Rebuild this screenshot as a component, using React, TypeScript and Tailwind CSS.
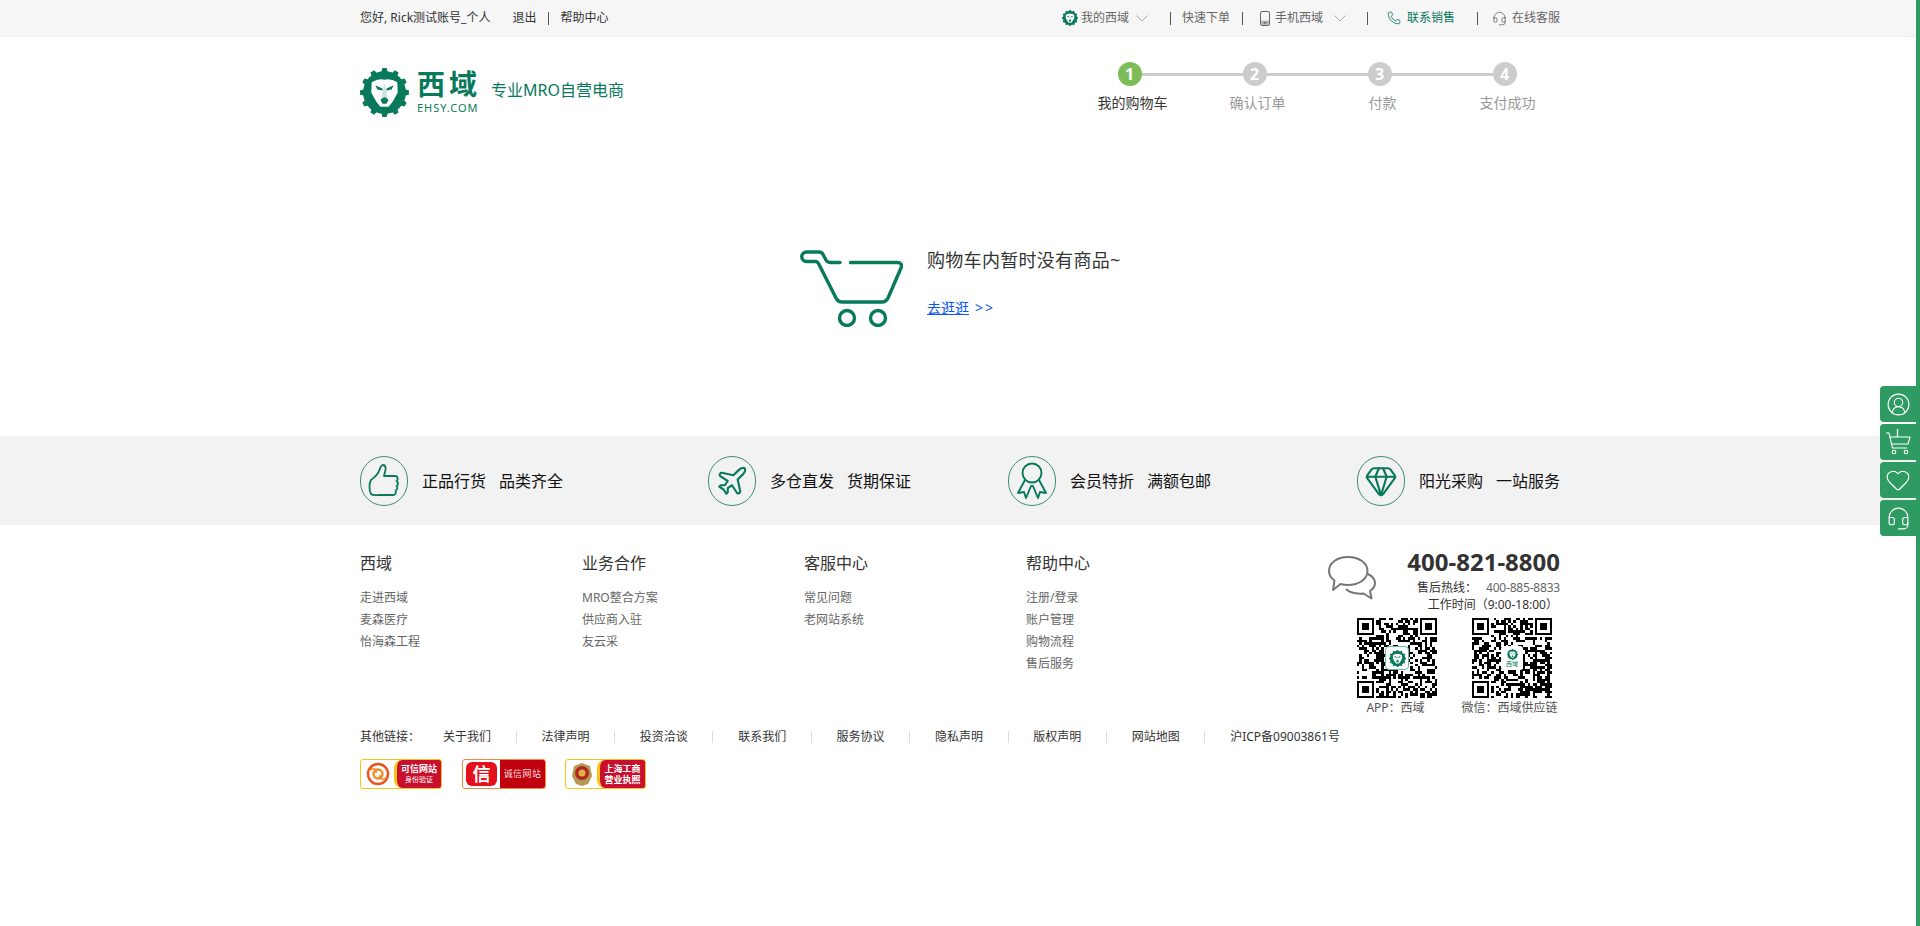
import React from "react";
import { Plane, Gem, CircleUserRound, Heart, Headset, Phone } from "lucide-react";

const GREEN = "#08795b";

function gearPath(cx: number, cy: number, ro: number, ri: number, teeth: number) {
  const pts: string[] = [];
  const step = (Math.PI * 2) / teeth;
  for (let i = 0; i < teeth; i++) {
    const a = i * step - Math.PI / 2;
    const seq: [number, number][] = [
      [a - step * 0.27, ri],
      [a - step * 0.17, ro],
      [a + step * 0.17, ro],
      [a + step * 0.27, ri],
    ];
    seq.forEach(([an, r]) => pts.push(`${(cx + r * Math.cos(an)).toFixed(2)},${(cy + r * Math.sin(an)).toFixed(2)}`));
  }
  return "M" + pts.join("L") + "Z";
}

function LionGear({ size, className }: { size: number; className?: string }) {
  return (
    <svg width={size} height={size} viewBox="0 0 48 48" className={className}>
      <path d={gearPath(24, 24, 24, 20.5, 12)} fill={GREEN} />
      <circle cx="24" cy="24" r="21" fill={GREEN} />
      <path d="M11.5 14 Q18 10 24 11.5 Q30 10 36.5 14 L37 24 L32 33 L28 38 L20 38 L16 33 L11 24 Z" fill="#fff" />
      <path d="M15 17 L22 20 L22 22 L17 21 Z M33 17 L26 20 L26 22 L31 21 Z" fill={GREEN} />
      <path d="M22 23 L24 15 L26 23 L27 30 L24 32 L21 30 Z" fill={GREEN} opacity="0.2" />
      <path d="M20 31 L24 28.5 L28 31 L26 35 L22 35 Z" fill={GREEN} />
    </svg>
  );
}

function Chevron() {
  return (
    <svg width="12" height="7" viewBox="0 0 12 7" className="shrink-0">
      <path d="M0.5 0.5 L6 6 L11.5 0.5" fill="none" stroke="#aaa" strokeWidth="1" />
    </svg>
  );
}

function Bar({ className }: { className: string }) {
  return <span className={`block h-[13px] w-px bg-[#555] ${className}`} />;
}

function TopBar() {
  return (
    <div className="h-[37px] bg-[#f6f6f6] border-b border-[#eeeeee]">
      <div className="w-[1200px] mx-auto h-full flex items-center justify-between text-xs text-[#333]">
        <div className="flex items-center">
          <span>您好, Rick测试账号_个人</span>
          <span className="ml-[22px]">退出</span>
          <Bar className="ml-[12px]" />
          <span className="ml-[11px]">帮助中心</span>
        </div>
        <div className="flex items-center text-[#666]">
          <LionGear size={16} />
          <span className="ml-[3px]">我的西域</span>
          <span className="ml-[7px]"><Chevron /></span>
          <Bar className="ml-[22px]" />
          <span className="ml-[11px]">快速下单</span>
          <Bar className="ml-[12px]" />
          <svg width="10" height="15" viewBox="0 0 10 15" className="ml-[17px]">
            <rect x="0.5" y="0.5" width="9" height="14" rx="1.5" fill="none" stroke="#666" />
            <rect x="1" y="9.5" width="8" height="4.5" fill="#bbb" />
            <rect x="3.5" y="11" width="3" height="1.5" fill="#666" />
          </svg>
          <span className="ml-[5px]">手机西域</span>
          <span className="ml-[11px]"><Chevron /></span>
          <Bar className="ml-[21px]" />
          <Phone size={14} color={GREEN} strokeWidth={1.4} className="ml-[19px]" />
          <span className="ml-[6px] text-[#08795b]">联系销售</span>
          <Bar className="ml-[22px]" />
          <Headset size={15} color="#666" strokeWidth={1.3} className="ml-[14px]" />
          <span className="ml-[5px]">在线客服</span>
        </div>
      </div>
    </div>
  );
}

const STEPS = ["我的购物车", "确认订单", "付款", "支付成功"];

function Header() {
  return (
    <div className="w-[1200px] mx-auto h-[93px] flex justify-between">
      <div className="flex items-start pt-[31px]">
        <LionGear size={49} />
        <div className="ml-[8px] w-[62px] flex flex-col text-[#08795b]">
          <span className="h-[30px] mt-[1px] text-[28px] leading-[30px] font-bold tracking-[4px] whitespace-nowrap">西域</span>
          <span className="mt-[2px] text-[11px] leading-[14px] tracking-[1px] whitespace-nowrap">EHSY.COM</span>
        </div>
        <span className="ml-[12px] mt-[10px] text-base leading-6 text-[#08795b] whitespace-nowrap">专业MRO自营电商</span>
      </div>
      <div className="flex -mr-[7px] pt-[25px]">
        {STEPS.map((label, i) => (
          <div key={label} className="relative w-[125px] flex flex-col items-center">
            {i < 3 && <span className="absolute left-[62px] top-[11px] h-[3px] w-[125px] bg-[#cccccc]" />}
            <span
              className={`relative w-[24px] h-[24px] rounded-full flex items-center justify-center text-white text-base font-bold leading-none ${
                i === 0 ? "bg-[#7cbd57]" : "bg-[#cccccc]"
              }`}
            >
              {i + 1}
            </span>
            <span className={`mt-[7px] ml-[6px] text-sm leading-5 whitespace-nowrap ${i === 0 ? "text-[#333]" : "text-[#999]"}`}>{label}</span>
          </div>
        ))}
      </div>
    </div>
  );
}

function CartIcon() {
  return (
    <svg width="103" height="77" viewBox="0 0 103 77" className="shrink-0" fill="none" stroke={GREEN} strokeWidth="3.4" strokeLinecap="round" strokeLinejoin="round">
      <path d="M40 12.5 H30 Q27.5 12.5 26 10 L23 4.5 Q22 2 19 2 H6.5 A4.7 4.7 0 0 0 6.5 11.5 H15 Q17.5 11.5 18.5 13.5 L36 48 Q38 52 42 52 H82 Q86 52 88 48 L101 18 Q103 12.5 97 12.5 H50.5" />
      <circle cx="47" cy="68" r="7.5" />
      <circle cx="78" cy="68" r="7.5" />
    </svg>
  );
}

function EmptyCart() {
  return (
    <div className="h-[306px] w-[1200px] mx-auto pt-[118px] pl-[440px] flex items-start">
      <span className="mt-[2px]"><CartIcon /></span>
      <div className="ml-[24px] flex flex-col whitespace-nowrap">
        <span className="text-lg leading-6 tracking-[0.3px] text-[#333]">购物车内暂时没有商品~</span>
        <span className="mt-[26px] text-sm leading-[20px] text-[#0b57f0]">
          <span className="underline">去逛逛</span>
          <span className="ml-[6px] tracking-[2px]">&gt;&gt;</span>
        </span>
      </div>
    </div>
  );
}

function ThumbIcon() {
  return (
    <svg width="32" height="34" viewBox="0 0 32 34" fill="none" stroke={GREEN} strokeWidth="1.8" strokeLinejoin="round" strokeLinecap="round">
      <path d="M3 16 C6 13 10 11 11 7 C12 4 13 1 15 1 C18 1 18 5 17 8 C16.5 10 16 11 16 12 H27 C30 12 30.5 16 28.5 17 C30.5 18 30.5 21 28.5 22 C30 23 29.5 26 27.5 26.5 C28.5 28 27.5 31 25 31 H12 C8 31 5 32 3 30 C1 27 1 19 3 16 Z" />
    </svg>
  );
}

function AwardIcon() {
  return (
    <svg width="32" height="38" viewBox="0 0 32 38" fill="none" stroke={GREEN} strokeWidth="1.9" strokeLinejoin="round">
      <circle cx="16" cy="11" r="9.5" />
      <path d="M9 18 L2 31 L8 30 L10 36 L15.5 23" />
      <path d="M23 18 L30 31 L24 30 L22 36 L16.5 23" />
    </svg>
  );
}

function ServiceItem({ icon, a, b, className }: { icon: React.ReactNode; a: string; b: string; className?: string }) {
  return (
    <div className={`flex items-center w-[203px] ${className ?? ""}`}>
      <span className="w-[48px] h-[50px] shrink-0 rounded-full border border-[#3b9078] flex items-center justify-center">{icon}</span>
      <span className="ml-[14px] text-base leading-6 text-[#111] whitespace-nowrap">{a}</span>
      <span className="ml-[13px] text-base leading-6 text-[#111] whitespace-nowrap">{b}</span>
    </div>
  );
}

function Services() {
  return (
    <div className="h-[89px] bg-[#f2f2f2]">
      <div className="w-[1200px] mx-auto h-full flex items-center">
        <ServiceItem icon={<ThumbIcon />} a="正品行货" b="品类齐全" />
        <ServiceItem icon={<Plane size={34} color={GREEN} strokeWidth={1.5} />} a="多仓直发" b="货期保证" className="ml-[145px]" />
        <ServiceItem icon={<AwardIcon />} a="会员特折" b="满额包邮" className="ml-[97px]" />
        <ServiceItem icon={<Gem size={34} color={GREEN} strokeWidth={1.5} />} a="阳光采购" b="一站服务" className="ml-[146px]" />
      </div>
    </div>
  );
}

const COLS = [
  { t: "西域", l: ["走进西域", "麦森医疗", "怡海森工程"] },
  { t: "业务合作", l: ["MRO整合方案", "供应商入驻", "友云采"] },
  { t: "客服中心", l: ["常见问题", "老网站系统"] },
  { t: "帮助中心", l: ["注册/登录", "账户管理", "购物流程", "售后服务"] },
];

function finder(x: number, y: number) {
  return (
    <g key={`f${x}${y}`}>
      <rect x={x} y={y} width="7" height="7" fill="#000" />
      <rect x={x + 1} y={y + 1} width="5" height="5" fill="#fff" />
      <rect x={x + 2} y={y + 2} width="3" height="3" fill="#000" />
    </g>
  );
}

function QR({ seed, variant }: { seed: number; variant: "app" | "wx" }) {
  const n = 33;
  const cells: React.ReactNode[] = [];
  let s = seed;
  for (let y = 0; y < n; y++) {
    for (let x = 0; x < n; x++) {
      s = (s * 1664525 + 1013904223) >>> 0;
      const on = (s >>> 16) % 100 < 52;
      const inFinder = (x < 8 && y < 8) || (x >= n - 8 && y < 8) || (x < 8 && y >= n - 8);
      if (on && !inFinder) cells.push(<rect key={`${x}-${y}`} x={x} y={y} width="1" height="1" fill="#000" />);
    }
  }
  return (
    <div className="relative w-[80px] h-[80px]">
      <svg width="80" height="80" viewBox="0 0 33 33" shapeRendering="crispEdges" className="block">
        <rect width="33" height="33" fill="#fff" />
        {cells}
        {finder(0, 0)}
        {finder(n - 7, 0)}
        {finder(0, n - 7)}
      </svg>
      {variant === "app" ? (
        <span className="absolute left-[28px] top-[28px] w-[24px] h-[24px] rounded-[4px] bg-white border border-[#6bb69d] flex items-center justify-center">
          <LionGear size={17} />
        </span>
      ) : (
        <span className="absolute left-[29px] top-[28px] w-[22px] h-[24px] rounded-[3px] bg-white flex flex-col items-center justify-center">
          <LionGear size={11} />
          <span className="text-[6px] leading-[8px] text-[#08795b]">西域</span>
        </span>
      )}
    </div>
  );
}

function BubbleIcon() {
  return (
    <svg width="48" height="44" viewBox="0 0 48 44" fill="none" stroke="#777" strokeWidth="2" strokeLinejoin="round" className="shrink-0">
      <path d="M20 1 C31 1 39.5 7 39.5 15 C39.5 23 31 29 20 29 C17 29 14.5 28.6 12.5 28 L5 34 L6.5 24.5 C3 22 1 19 1 15 C1 7 9 1 20 1 Z" />
      <path d="M40 18 C44 20 47 23 47 27 C47 30 45 33 42 35 L43.5 42.5 L35.5 37.5 C29 38 22 37 18 33" />
    </svg>
  );
}

function Footer() {
  return (
    <div className="w-[1200px] mx-auto">
      <div className="flex pt-[22px]">
        <div className="flex pt-[4px] w-[968px]">
          {COLS.map((c) => (
            <div key={c.t} className="w-[222px] flex flex-col">
              <span className="text-base leading-6 text-[#333]">{c.t}</span>
              <div className="mt-[12px] flex flex-col text-xs leading-[22px] text-[#666]">
                {c.l.map((x) => (
                  <span key={x}>{x}</span>
                ))}
              </div>
            </div>
          ))}
        </div>
        <div className="w-[232px] flex flex-col">
          <div className="flex items-start">
            <span className="mt-[9px]"><BubbleIcon /></span>
            <div className="flex-1 flex flex-col items-end whitespace-nowrap text-xs text-[#333]">
              <span className="h-[30px] text-2xl leading-[30px] font-bold text-[#333]">400-821-8800</span>
              <span className="mt-[2px] h-[17px] leading-[17px]">
                售后热线：<span className="ml-[9px] tracking-[-0.2px] text-[#666]">400-885-8833</span>
              </span>
              <span className="h-[17px] leading-[17px] mr-[2px]">工作时间（9:00-18:00）</span>
            </div>
          </div>
          <div className="mt-[5px] pl-[29px] flex gap-[35px]">
            <div className="w-[80px] flex flex-col items-center">
              <QR seed={12345} variant="app" />
              <span className="mt-[1px] text-xs leading-[18px] text-[#555] whitespace-nowrap -ml-[3px]">APP：西域</span>
            </div>
            <div className="w-[80px] flex flex-col items-center">
              <QR seed={98765} variant="wx" />
              <span className="mt-[1px] text-xs leading-[18px] text-[#555] whitespace-nowrap -ml-[5px]">微信：西域供应链</span>
            </div>
          </div>
        </div>
      </div>
      <OtherLinks />
      <Badges />
    </div>
  );
}

const LINKS = ["关于我们", "法律声明", "投资洽谈", "联系我们", "服务协议", "隐私声明", "版权声明", "网站地图", "沪ICP备09003861号"];

function OtherLinks() {
  return (
    <div className="mt-[12px] flex items-center text-xs leading-4 text-[#333] whitespace-nowrap">
      <span className="w-[83px]">其他链接：</span>
      {LINKS.map((l, i) => (
        <React.Fragment key={l}>
          {i > 0 && <span className="block w-px h-[12px] bg-[#dddddd] mx-[24.7px]" />}
          <span>{l}</span>
        </React.Fragment>
      ))}
    </div>
  );
}

function Badges() {
  return (
    <div className="mt-[14px] flex text-white whitespace-nowrap">
      <div className="w-[82px] h-[30px] rounded-[3px] border border-[#f5c518] bg-white flex overflow-hidden">
        <span className="w-[33px] flex items-center justify-center">
          <svg width="24" height="24" viewBox="0 0 24 24" fill="none" stroke="#e8531f" strokeWidth="2.4">
            <circle cx="12" cy="12" r="10" />
            <circle cx="12" cy="12" r="4.5" stroke="#f08a24" />
            <path d="M3 9 C7 5 11 7 10 11 M21 15 C17 19 13 17 14 13" stroke="#f08a24" strokeWidth="1.6" />
          </svg>
        </span>
        <span className="flex-1 bg-[#c8102e] border-l-[3px] border-[#f5c518] rounded-l-[8px] flex flex-col items-center justify-center">
          <span className="text-[9px] leading-[12px] font-bold">可信网站</span>
          <span className="text-[7px] leading-[10px]">身份验证</span>
        </span>
      </div>
      <div className="ml-[20px] w-[84px] h-[30px] rounded-[3px] border border-[#f08a3c] bg-white flex overflow-hidden">
        <span className="w-[37px] flex items-center justify-center">
          <span className="w-[31px] h-[24px] rounded-[6px] bg-[#e3101c] text-[18px] leading-[24px] text-center font-bold">信</span>
        </span>
        <span className="flex-1 bg-[#c0000f] flex items-center justify-center text-[9px] tracking-[0.4px] text-[#f4dcdc]">诚信网站</span>
      </div>
      <div className="ml-[19px] w-[81px] h-[30px] rounded-[3px] border border-[#f5c518] bg-white flex overflow-hidden">
        <span className="w-[31px] flex items-center justify-center">
          <svg width="24" height="25" viewBox="0 0 24 25">
            <path d="M12 1 L20 4 L22 14 L18 22 L12 24 L6 22 L2 14 L4 4 Z" fill="#b59a55" />
            <circle cx="12" cy="11" r="7" fill="#b3261e" />
            <circle cx="12" cy="11" r="3.5" fill="#d8b44a" />
          </svg>
        </span>
        <span className="flex-1 bg-[#c8102e] border-l-[3px] border-[#f5c518] rounded-l-[8px] flex flex-col items-center justify-center font-bold text-[9px] leading-[11px]">
          <span>上海工商</span>
          <span>营业执照</span>
        </span>
      </div>
    </div>
  );
}

function SideCart() {
  return (
    <svg width="26" height="28" viewBox="0 0 26 28" fill="none" stroke="#fff" strokeWidth="1.1" strokeLinejoin="round">
      <path d="M1 5 H4 L7.5 20 H22" />
      <path d="M4.8 9 H25 L23 16 H6.4" />
      <path d="M12.5 1 V9" strokeWidth="1.4" />
      <circle cx="9" cy="24" r="1.8" />
      <circle cx="21" cy="24" r="1.8" />
    </svg>
  );
}

function SideBar() {
  const tab = "w-[36px] h-[36px] bg-[#2e9b62] flex items-center justify-center rounded-l-[4px]";
  return (
    <>
      <div className="absolute top-0 right-0 bottom-0 w-[4px] bg-[#2e9b62]" />
      <div className="absolute right-[4px] top-[386px] flex flex-col gap-[2px]">
        <div className={tab}><CircleUserRound size={25} color="#fff" strokeWidth={1.1} /></div>
        <div className={tab}><SideCart /></div>
        <div className={tab}><Heart size={26} color="#fff" strokeWidth={1.1} /></div>
        <div className={tab}><Headset size={25} color="#fff" strokeWidth={1.1} /></div>
      </div>
    </>
  );
}

export default function App() {
  return (
    <div className="relative h-[926px] overflow-hidden bg-white font-['Noto_Sans','Noto_Sans_CJK_SC',sans-serif]">
      <TopBar />
      <Header />
      <EmptyCart />
      <Services />
      <Footer />
      <SideBar />
    </div>
  );
}
